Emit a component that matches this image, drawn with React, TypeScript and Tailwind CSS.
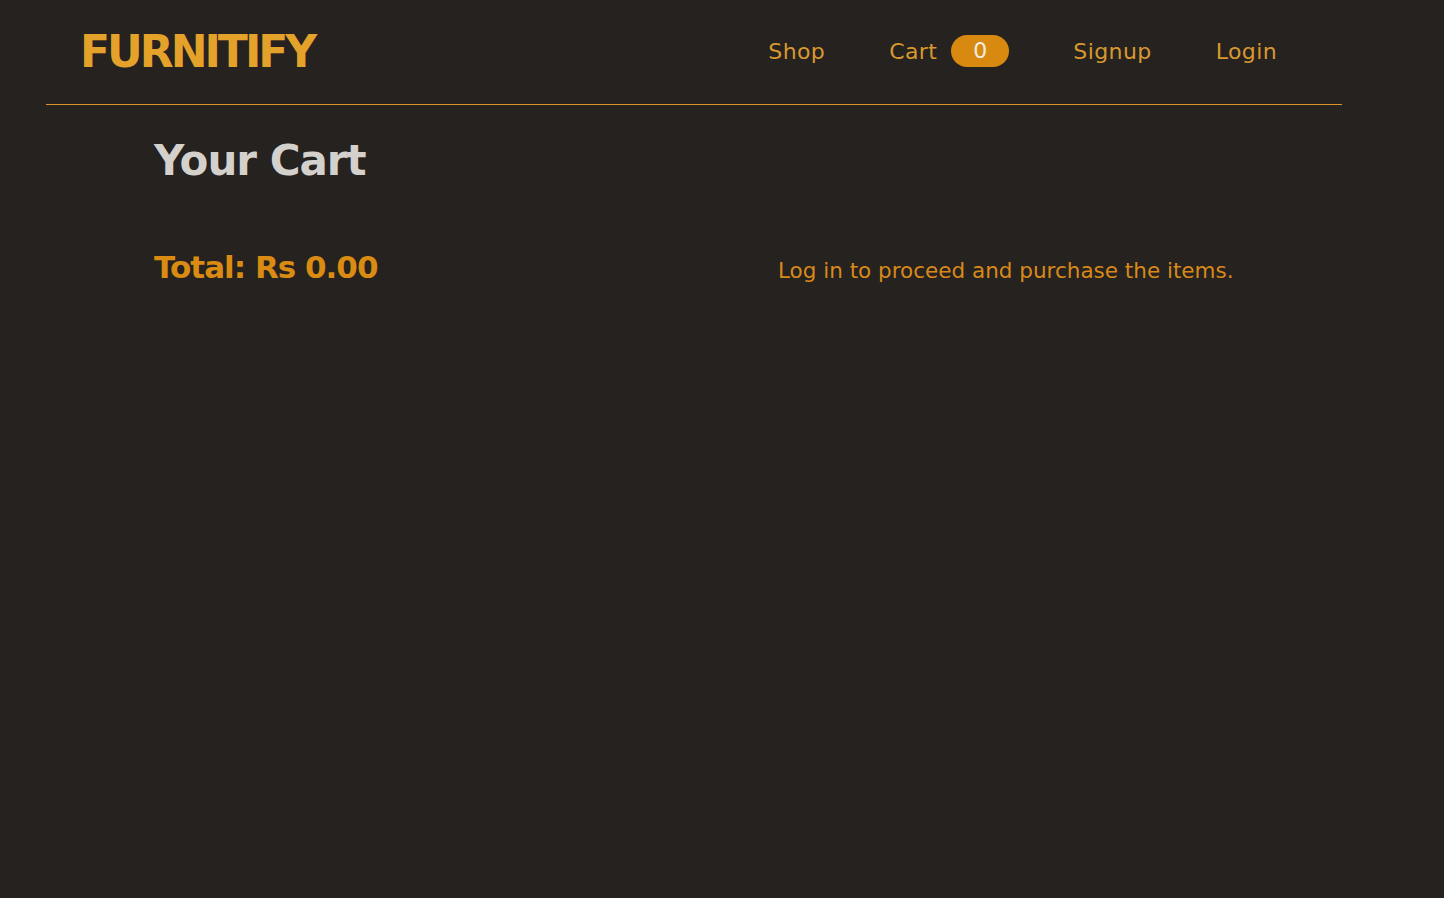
import React from 'react'

const font = { fontFamily: '"DejaVu Sans", "Liberation Sans", sans-serif' }

function NavLink({ children }: { children: React.ReactNode }) {
  return <a className="text-[22px] text-[#d9982f] px-8 leading-none">{children}</a>
}

export default function App() {
  return (
    <div className="min-h-[898px] bg-[#252220]" style={font}>
      <header className="ml-[46px] w-[1296px] h-[105px] border-b border-[#d9952a] flex items-center justify-between pl-[34px] pr-[33px]">
        <h1 className="text-[44px] font-bold text-[#e5a22a] tracking-[-3px] leading-none">FURNITIFY</h1>
        <nav className="flex items-center tracking-[0.4px]">
          <NavLink>Shop</NavLink>
          <a className="flex items-center px-8 text-[22px] text-[#d9982f] leading-none">
            Cart
            <span className="ml-[14px] inline-flex items-center justify-center w-[58px] h-[32px] rounded-full bg-[#d8890f] text-[#f3ece0] text-[22px] -translate-y-px">0</span>
          </a>
          <NavLink>Signup</NavLink>
          <NavLink>Login</NavLink>
        </nav>
      </header>
      <main className="pl-[154px] pt-[35px]">
        <h2 className="text-[42px] font-bold text-[#d4d0cc] tracking-[-1px] leading-none">Your Cart</h2>
        <div className="flex items-baseline mt-[70px]">
          <p className="w-[624px] text-[31px] font-bold text-[#d98b12] tracking-[-1px] leading-none">Total: Rs 0.00</p>
          <p className="text-[21.5px] text-[#d8891a] leading-none">Log in to proceed and purchase the items.</p>
        </div>
      </main>
    </div>
  )
}
